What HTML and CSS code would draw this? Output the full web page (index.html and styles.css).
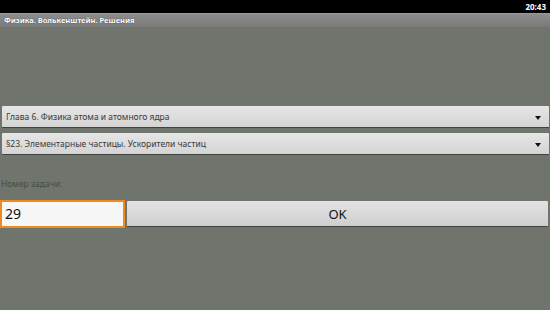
FILE: index.html
```html
<!DOCTYPE html>
<html>
<head>
<meta charset="utf-8">
<link rel="stylesheet" href="styles.css">
</head>
<body>
<div class="status"><span class="clock">20:43</span></div>
<div class="titlebar">Физика. Волькенштейн. Решения</div>
<div class="content">
  <div class="spinner"><span>Глава 6. Физика атома и атомного ядра</span><span class="arrow"></span></div>
  <div class="spinner"><span>§23. Элементарные частицы. Ускорители частиц</span><span class="arrow"></span></div>
  <div class="label">Номер задачи:</div>
  <div class="row">
    <div class="input">29</div>
    <div class="button">OK</div>
  </div>
</div>
</body>
</html>
```
FILE: styles.css
```css
html, body {
  margin: 0;
  padding: 0;
}
body {
  width: 550px;
  height: 310px;
  background: #6f756d;
  font-family: "Noto Sans", "Open Sans", sans-serif;
  overflow: hidden;
}
.status {
  height: 13px;
  background: #000;
  display: flex;
  justify-content: flex-end;
  align-items: center;
  padding-right: 4px;
}
.clock {
  color: #fff;
  font-size: 8px;
  font-weight: bold;
}
.titlebar {
  height: 14px;
  background: linear-gradient(#8d8d8d, #7a7a7a);
  border-top: 1px solid #9a9a9a;
  box-sizing: border-box;
  color: #fff;
  font-size: 7.5px;
  font-weight: bold;
  padding-left: 4px;
  line-height: 13px;
  text-shadow: 0 0 1px #333;
}
.content {
  padding: 79px 1px 0 2px;
}
.spinner {
  height: 21px;
  margin-bottom: 5px;
  background: linear-gradient(#e6e6e6, #d4d4d4);
  border-bottom: 1px solid #3f423e;
  border-radius: 1px;
  display: flex;
  align-items: center;
  justify-content: space-between;
  padding: 0 8px 0 4px;
  font-size: 8.5px;
  color: #3a3a3a;
}
.arrow {
  width: 0;
  height: 0;
  border-left: 3.5px solid transparent;
  border-right: 3.5px solid transparent;
  border-top: 4px solid #111;
  margin-top: 2px;
}
.label {
  margin-top: 23px;
  font-size: 8.5px;
  color: #484c46;
  margin-left: -1px;
}
.row {
  display: flex;
  margin-top: 11px;
  margin-left: -2px;
  gap: 2px;
  align-items: flex-start;
}
.input {
  width: 125px;
  height: 28px;
  box-sizing: border-box;
  border: 2px solid #f08a1c;
  background: #f7f7f7;
  font-size: 14px;
  color: #111;
  padding-left: 3px;
  line-height: 24px;
}
.button {
  flex: 1;
  margin-top: 1px;
  margin-right: 1px;
  height: 26px;
  box-sizing: border-box;
  background: linear-gradient(#e3e3e3, #cfcfcf);
  border-bottom: 1px solid #3f423e;
  border-radius: 1px;
  display: flex;
  align-items: center;
  justify-content: center;
  font-size: 13px;
  color: #111;
}
```
